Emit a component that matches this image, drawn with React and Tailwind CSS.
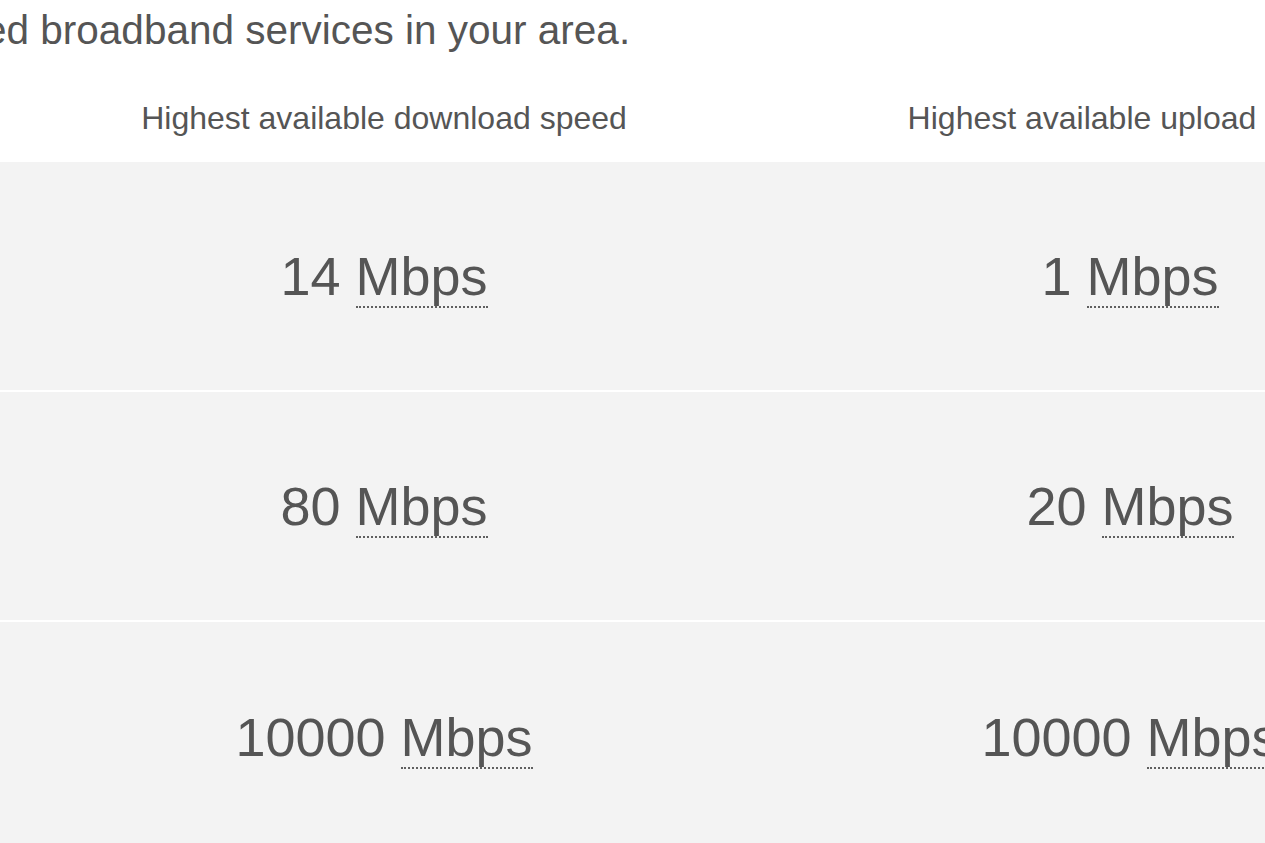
const ROWS = [
  { down: '14', up: '1' },
  { down: '80', up: '20' },
  { down: '10000', up: '10000' },
];

function Speed({ value }) {
  return (
    <span>
      {value}{' '}
      <abbr title="megabits per second" className="no-underline border-b-2 border-dotted border-[#5f5f5f]">
        Mbps
      </abbr>
    </span>
  );
}

export default function App() {
  return (
    <div
      className="w-[1265px] h-[843px] overflow-hidden bg-white text-[#555]"
      style={{ fontFamily: '"Liberation Sans", Arial, sans-serif' }}
    >
      {/* intro line, cut off on the left */}
      <p className="pt-[6px] text-[40.5px] leading-[48px] whitespace-nowrap -ml-[16px]">
        ed broadband services in your area.
      </p>

      <div className="w-[1503px]">
        {/* header */}
        <div className="grid grid-cols-[11px_746px_746px] pt-[46px] pb-[26px] text-[32px] leading-[36px] whitespace-nowrap">
          <div />
          <div className="text-center">Highest available download speed</div>
          <div className="text-center">Highest available upload speed</div>
        </div>

        {/* speed rows */}
        <div className="divide-y-2 divide-white">
          {ROWS.map((r, i) => (
            <div
              key={i}
              className="grid grid-cols-[11px_746px_746px] items-center h-[230px] bg-[#f3f3f3] text-[54px] leading-[62px] whitespace-nowrap"
            >
              <div />
              <div className="text-center">
                <Speed value={r.down} />
              </div>
              <div className="text-center">
                <Speed value={r.up} />
              </div>
            </div>
          ))}
        </div>
      </div>
    </div>
  );
}
